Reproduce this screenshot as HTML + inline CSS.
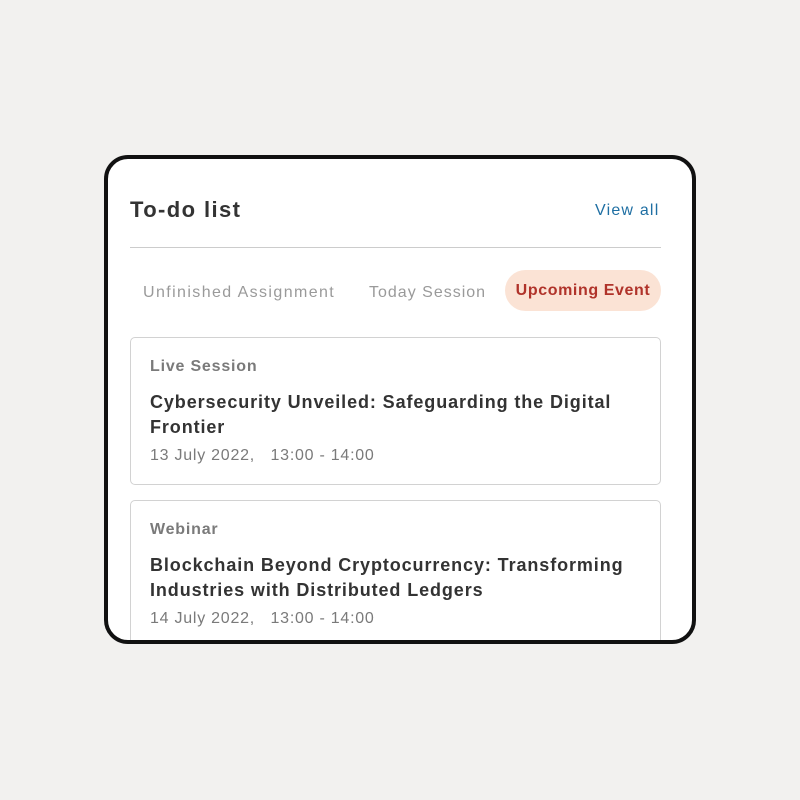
<!DOCTYPE html>
<html><head><meta charset="utf-8"><style>
*{margin:0;padding:0;box-sizing:border-box}
body{width:800px;height:800px;background:#f2f1ef;font-family:"Liberation Sans",sans-serif;position:relative;overflow:hidden}
.frame{position:absolute;left:104px;top:155px;width:592px;height:489px;border:4px solid #111;border-radius:24px;background:#fff;overflow:hidden}
.a{position:absolute;white-space:nowrap}
.title{left:22px;top:38px;font-size:22px;font-weight:bold;color:#333;letter-spacing:1.4px}
.view{left:487px;top:43px;font-size:16px;color:#1f6fa3;letter-spacing:1.2px}
.hr{position:absolute;left:22px;top:88px;width:531px;height:1px;background:#ccc}
.tab{top:125px;font-size:16px;color:#9a9a9a}
.pill{position:absolute;left:397px;top:111px;width:156px;height:41px;border-radius:21px;background:#fbe3d5;color:#b0332a;font-weight:bold;font-size:16px;line-height:41px;text-align:center;letter-spacing:0.6px}
.card{position:absolute;left:22px;width:531px;border:1.5px solid #d2d2d2;border-radius:5px}
.k{position:absolute;left:19px;font-size:16px;font-weight:bold;color:#7a7a7a;letter-spacing:0.8px}
.t{position:absolute;left:19px;font-size:18px;font-weight:bold;color:#333;line-height:25px;white-space:nowrap;letter-spacing:0.9px}
.d{position:absolute;left:19px;font-size:16px;color:#7a7a7a;white-space:pre;letter-spacing:0.75px}
</style></head><body>
<div class="frame">
<div class="a title">To-do list</div>
<div class="a view">View all</div>
<div class="hr"></div>
<div class="a tab" style="left:35px;letter-spacing:1.4px">Unfinished Assignment</div>
<div class="a tab" style="left:261px;letter-spacing:1px">Today Session</div>
<div class="pill">Upcoming Event</div>
<div class="card" style="top:178px;height:148px">
<div class="k" style="top:20px">Live Session</div>
<div class="t" style="top:52px">Cybersecurity Unveiled: Safeguarding the Digital<br>Frontier</div>
<div class="d" style="top:109px">13 July 2022,   13:00 - 14:00</div>
</div>
<div class="card" style="top:341px;height:200px">
<div class="k" style="top:20px">Webinar</div>
<div class="t" style="top:52px">Blockchain Beyond Cryptocurrency: Transforming<br>Industries with Distributed Ledgers</div>
<div class="d" style="top:109px">14 July 2022,   13:00 - 14:00</div>
</div>
</div>
</body></html>
